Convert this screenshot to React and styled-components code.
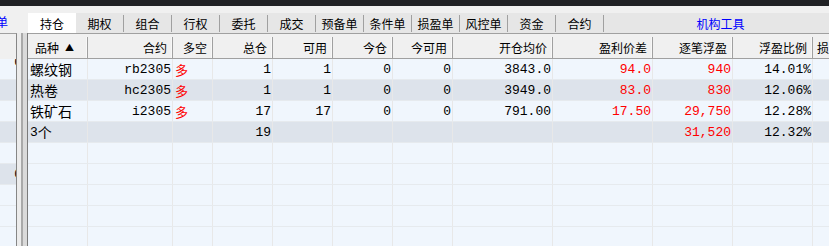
import React from 'react';
import styled, { createGlobalStyle } from 'styled-components';

const GlobalStyle = createGlobalStyle`
  html, body {
    margin: 0;
    padding: 0;
    height: 246px;
    overflow: hidden;
    background: #f0f0f0;
  }
  * {
    box-sizing: border-box;
  }
`;

const CJK = `"Noto Sans CJK SC", "Noto Sans", sans-serif`;
const MONO = `"Liberation Mono", "Noto Sans CJK SC", monospace`;
const COLS = '60px 85px 40px 60px 60px 60px 60px 100px 100px 80px 80px 60px';

const Page = styled.div`
  width: 829px;
  height: 246px;
  display: flex;
  flex-direction: column;
  overflow: hidden;
`;

const TitleBar = styled.div`
  height: 6px;
  background: #202124;
  flex-shrink: 0;
`;

const Strip = styled.div`
  height: 27px;
  display: flex;
  flex-shrink: 0;
  background: #f0f0f0;
`;

const LeftTab = styled.div`
  width: 28px;
  overflow: hidden;
  padding-top: 9px;
  font: 12px ${CJK};
  color: #0000ff;
  line-height: 14px;
  span {
    display: block;
    margin-left: -4px;
  }
`;

const TabBar = styled.div`
  flex: 1;
  display: flex;
  align-items: flex-end;
  overflow: hidden;
`;

const Tab = styled.div`
  width: ${(p) => (p.$active ? 48 : 47)}px;
  height: 20px;
  flex-shrink: 0;
  display: flex;
  align-items: center;
  justify-content: center;
  font: 12px ${CJK};
  color: #000;
  background: ${(p) => (p.$active ? '#ffffff' : '#e6e6e6')};
`;

const TabSep = styled.div`
  width: 1px;
  height: 20px;
  flex-shrink: 0;
  background: #e6e6e6;
  border-top: 2px solid #e6e6e6;
  border-bottom: 1px solid #e6e6e6;
  box-shadow: inset 1px 0 0 #a0a0a0;
`;

const ToolLink = styled.div`
  flex: 1;
  height: 20px;
  padding-left: 8px;
  display: flex;
  align-items: center;
  justify-content: center;
  background: #e6e6e6;
  font: 12px ${CJK};
  color: #0000ff;
`;

const Content = styled.div`
  flex: 1;
  display: flex;
  min-height: 0;
`;

const LeftGrid = styled.div`
  width: 17px;
  flex-shrink: 0;
  border-right: 1px solid #868686;
  border-top: 1px solid #a0a0a0;
  overflow: hidden;
`;

const LeftHead = styled.div`
  height: 25px;
  background: #f0f0f0;
`;

const LeftRow = styled.div`
  height: 21px;
  display: flex;
  justify-content: flex-end;
  align-items: ${(p) => (p.$top ? 'flex-start' : 'center')};
  overflow: hidden;
  background: ${(p) => (p.$alt ? '#dde3eb' : '#f0f6fd')};
  border-bottom: 1px solid #e6eaee;
  font: 13px ${MONO};
  line-height: ${(p) => (p.$top ? '8px' : '15px')};
  span {
    margin-right: -6px;
  }
`;

const Splitter = styled.div`
  width: 11px;
  flex-shrink: 0;
  background: linear-gradient(
    to right,
    #ececec 0 4px,
    #a9a9a9 4px 6px,
    #dadada 6px 10px,
    #7a7a7a 10px 11px
  );
`;

const Grid = styled.div`
  flex: 1;
  overflow: hidden;
  background: #f0f6fd;
`;

const HeadRow = styled.div`
  display: grid;
  grid-template-columns: ${COLS};
  height: 26px;
  padding-top: 3px;
  background: #f0f0f0;
  border-top: 1px solid #a0a0a0;
  border-bottom: 1px solid #a0a0a0;
`;

const HeadCell = styled.div`
  height: 21px;
  display: flex;
  align-items: center;
  justify-content: ${(p) => (p.$left ? 'flex-start' : 'flex-end')};
  padding: ${(p) => (p.$left ? '0 0 0 7px' : '0 5px 0 0')};
  border-right: 1px solid #a0a0a0;
  box-shadow: inset -1px 0 0 #f8f8f8;
  font: 12px ${CJK};
  color: #000;
  white-space: nowrap;
  overflow: hidden;
`;

const SortMark = styled.span`
  font-size: 9px;
  margin-left: 6px;
`;

const Row = styled.div`
  display: grid;
  grid-template-columns: ${COLS};
  height: 21px;
  background: ${(p) => (p.$alt ? '#dde3eb' : '#f0f6fd')};
  border-bottom: 1px solid #e6eaee;
`;

const Cell = styled.div`
  display: flex;
  align-items: center;
  justify-content: ${(p) => (p.$left ? 'flex-start' : 'flex-end')};
  padding: ${(p) => (p.$left ? '0 0 0 2px' : '0 1px 0 0')};
  border-right: 1px solid #e8e8e8;
  font: ${(p) => (p.$cjk ? `14px ${CJK}` : `13px ${MONO}`)};
  color: ${(p) => (p.$red ? '#ff0000' : '#000000')};
  white-space: nowrap;
  overflow: hidden;
`;

const tabs = ['期权', '组合', '行权', '委托', '成交', '预备单', '条件单', '损盈单', '风控单', '资金', '合约'];

const headers = ['合约', '多空', '总仓', '可用', '今仓', '今可用', '开仓均价', '盈利价差', '逐笔浮盈', '浮盈比例'];

const positions = [
  { name: '螺纹钢', code: 'rb2305', dir: '多', total: '1', avail: '1', today: '0', todayAvail: '0', open: '3843.0', diff: '94.0', pnl: '940', ratio: '14.01%' },
  { name: '热卷', code: 'hc2305', dir: '多', total: '1', avail: '1', today: '0', todayAvail: '0', open: '3949.0', diff: '83.0', pnl: '830', ratio: '12.06%' },
  { name: '铁矿石', code: 'i2305', dir: '多', total: '17', avail: '17', today: '0', todayAvail: '0', open: '791.00', diff: '17.50', pnl: '29,750', ratio: '12.28%' },
];

const emptyCells = Array.from({ length: 12 });

const App = () => (
  <Page>
    <GlobalStyle />
    <TitleBar />
    <Strip>
      <LeftTab>
        <span>单</span>
      </LeftTab>
      <TabBar>
        <Tab $active>持仓</Tab>
        {tabs.map((t) => (
          <React.Fragment key={t}>
            <Tab>{t}</Tab>
            <TabSep />
          </React.Fragment>
        ))}
        <ToolLink>机构工具</ToolLink>
      </TabBar>
    </Strip>
    <Content>
      <LeftGrid>
        <LeftHead />
        <LeftRow $top>
          <span>0</span>
        </LeftRow>
        <LeftRow $alt />
        <LeftRow />
        <LeftRow $alt />
        <LeftRow />
        <LeftRow $alt>
          <span>0</span>
        </LeftRow>
        <LeftRow />
        <LeftRow />
        <LeftRow />
      </LeftGrid>
      <Splitter />
      <Grid>
        <HeadRow>
          <HeadCell $left>
            品种<SortMark>▲</SortMark>
          </HeadCell>
          {headers.map((h) => (
            <HeadCell key={h}>{h}</HeadCell>
          ))}
          <HeadCell $left style={{ paddingLeft: 4 }}>损盈</HeadCell>
        </HeadRow>
        {positions.map((p, i) => (
          <Row key={p.code} $alt={i % 2 === 1}>
            <Cell $left $cjk>{p.name}</Cell>
            <Cell>{p.code}</Cell>
            <Cell $left $red>{p.dir}</Cell>
            <Cell>{p.total}</Cell>
            <Cell>{p.avail}</Cell>
            <Cell>{p.today}</Cell>
            <Cell>{p.todayAvail}</Cell>
            <Cell>{p.open}</Cell>
            <Cell $red>{p.diff}</Cell>
            <Cell $red>{p.pnl}</Cell>
            <Cell>{p.ratio}</Cell>
            <Cell />
          </Row>
        ))}
        <Row $alt>
          <Cell $left>3<span style={{ fontFamily: CJK, fontSize: 14 }}>个</span></Cell>
          <Cell />
          <Cell />
          <Cell>19</Cell>
          <Cell />
          <Cell />
          <Cell />
          <Cell />
          <Cell />
          <Cell $red>31,520</Cell>
          <Cell>12.32%</Cell>
          <Cell />
        </Row>
        {[0, 1, 2, 3, 4].map((r) => (
          <Row key={r}>
            {emptyCells.map((_, c) => (
              <Cell key={c} />
            ))}
          </Row>
        ))}
      </Grid>
    </Content>
  </Page>
);

export default App;
